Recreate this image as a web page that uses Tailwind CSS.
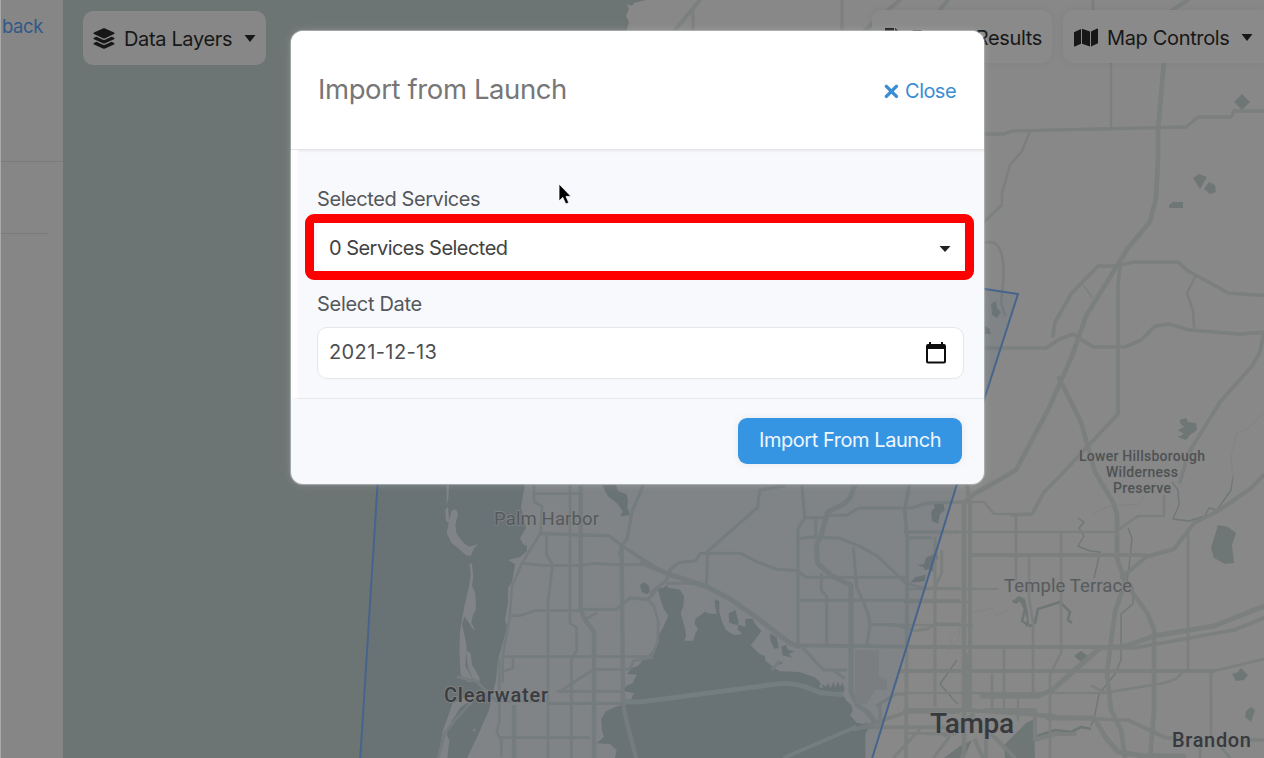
<!DOCTYPE html>
<html lang="en">
<head>
<meta charset="utf-8">
<title>Import from Launch</title>
<script src="https://cdn.jsdelivr.net/npm/@tailwindcss/browser@4"></script>
</head>
<body class="h-screen w-screen overflow-hidden bg-[#6d7475] font-['Inter','Liberation_Sans',sans-serif]">
<div class="relative flex h-[758px] w-[1264px] overflow-hidden">

  <!-- Map canvas -->
  <svg class="absolute inset-0" width="1264" height="758" viewBox="0 0 1264 758" fill="none" stroke-linejoin="round">
    <rect width="1264" height="758" fill="#6d7474"/>
    <!-- mainland -->
    <path fill="#888888" d="M646 0L634 3L632 6L627 4L629 9L626 16L629 22L626 32L620 200L525 484L521 507L526 528L520 538L523 544L527 546V551L520 557L508 560L515 564L512 582L508 588L508 603L505 620L507 627L498 660L496 680L489 710L478 735L467 758H1264V0Z"/>
    <!-- barrier islands -->
    <g transform="translate(340 470) scale(.33333)" fill="#888888">
      <path d="M320 45h7l-2 40-5 22zM316 120l8-10 4 48-10-4zM334 122l14-4 6 14-8 34 4 26 22 28 16 10 26-8-12 14-10 22-14-2-22-20-22-18-14-30z"/>
      <path d="M388 280l8 2 4 40-4 26 10 20 2 50-10 20-4 22 12 20-8-4-14-22-10-14-8 22 6 26 8 40-4 60 22 38 4 10h-18l-22-22-4-70 2-60 12-70 14-60 6-40z"/>
      <path d="M378 540l14 10 4 34 22 38 2 12-20-6-16-34zM338 700l40-20 24 6-40 26-26 40-16 40 8 20-6 52h-28l14-80zM400 775l8 4-8 8z"/>
    </g>
    <!-- Old Tampa Bay -->
    <g transform="translate(640 470) scale(.33333)" fill="#6d7474">
      <path d="M35 375l25-20 12-2 6-8 8 8 34 6 12 20-2 30-8 20 14 50 2 20-5 13h27l6-22 8-12-10-16 2-16 20-14 12-8 4 6 28 2-6-34 2-10 12 6 0 32 8 30 12 24 22 14h18l8-4-14-12 4-14 20 6v-24h22l6 14 20 24-18 24-14 18 24 24 18 8 2 14 30 24 14 8 58 2 46 16 14 12 4 8-6 10 64 12 20 28 16 16 2 16-8 12 20 22 22 4 10-6 2 22-8 14V868H-76l6-28-20-18-40-2 22-20-6-18-2-36 14-22 30-14 32-10 10-6 12-24-18-4-14-4 8-14 20-8 8-18 6-8-30-2 12-18 20-6 16-20 20-14 20-30 4-26 16-26 15-35-14-20-8-24-10-38z"/>
      <path d="M0 345l14-8 12 10 4 16-8 10-16-6zM266 430l20-10 4 16 6 20-4 10-24-8zM390 490l20 12 6 32-14 2-10-24zM424 530l14-6 6 16 20 4-18 8 12 12-30-8zM410 572l20 6-12 6z"/>
      <path d="M552 660l-8-18 14 8 6-10 8 14 8-18 6 16 8-16 6 14 8-12 6 20-4 8z"/>
      <path d="M-114 45h42l6 18 26 10 4 20-2 20 8 22-28 4 6-16-18-24-26-20z"/>
      <path d="M880 95l30 2 4 24-14 12-6 28-18-8-2-28 10-12zM890 245l4 20-16 22 4 18-16-8-10 4-6-10-20-6 22-2 6-20 18-8zM856 314l-2 20-44 4 16-16z"/>
    </g>
    <!-- lakes and rivers on the east side -->
    <g fill="#6f7776">
      <path d="M1234 102l8-8 8 8-8 8zM1193 178l6-4 8 3-7 12zM1204 189l5-7 6 3 1 7-6 2zM1169 205l4-3h10v6h-14zM1180 420l6-2 2 4 8 1 1 7-7 5-4 5-8-3 6-3-6-4 6-3-4-4z"/>
      <path d="M991 304l5-3 1 7 4 4-4 6-5-3zM985 326l4 2 2 6h-6z"/>
      <path d="M1218 525l10 2 8 6-4 12 2 18-9 1-11-6-3-10zM1074 656l7-5 7 5-7 6zM1232 674l6-2 3-4 7 7-4 5-8 1zM1246 711l5-4 4 3-4 12-6-5zM1012 601l7-5 6 3 3 14 1 11-4 4 2-8-5-20-6 4z"/>
      <path d="M944 758l16-12 12-6-8 18zM1004 745l22-22 8-4 1 39h-30z"/>
    </g>
    <path stroke="#6f7776" stroke-width="2.6" d="M1013 602l7-3 5 10-3 12 8 5 5-3 3-14 22-7 10 10-2 8 4 3M1037 736l18-6 16 2 10-5 10 2"/>
    <path stroke="#707877" stroke-width="1.4" d="M1078 518l6 4-5 6 5 8-6 10 12 5 10 1-6 26M1128 528l4 10-3 30-2 12 6 8v16l-12 10v46l-6 14-16 20-4 20 -4 12M1172 482l6 8 1 15-6 14 16 2 16-5 4-8 8 2 14-20 2-14M957 660l-17 24 12 14 6 6"/>
    <path stroke="#808483" d="M944 658l14-18 4-24 30-8 4 8 14-8M1264 412l-15 16-12 5-6 24 2 22M1092 514l18-8 30-2 6-12M953 645l-4-8 8-6"/>

    <!-- roads, north and east -->
    <g stroke="#7b7f7e" stroke-linecap="round">
      <path stroke-width="4" d="M700 0L675 30M900 0L865 30M948 0L938 12M1188 0L1165 15"/>
      <path stroke-width="3" d="M693 11v20M842 0v30M1093 0v10"/>
      <path stroke-width="3.4" d="M984 134h20l8-3 174-4 12-10h33l3-6h32"/>
      <path stroke-width="2.5" d="M1111 60v67M1030 131l-8 20-12 14-8 28v12l-18 17M985 243c16-6 20 16 18 40l-2 20 4 12M1195 277l-8 16 6 18 1 16"/>
      <path stroke-width="1.4" d="M1084 286l8 11"/>
      <path stroke-width="4.6" d="M1164 60l-6 70v30l-2 38-6 24-22 26-42 68-14 40-24 54-32 60-24 14-18 10-10 9v250l-6 16"/>
      <path stroke-width="3.6" d="M984 348h62l14-9 13-5 20 13h32l16-7 14-14 14-2 20 6 50 4 30-2M1264 332l-4 20-8 14-32 36-32 52-8 28M1053 336l2-14 16-28 27-28h16l20-4h44l10 9 26 14 14 8 44 3M1120 266l-2 20v128l-30 32-28 30-16 16-12 22-20 1"/>
      <path stroke-width="4.600" d="M1059 378l22 44 14 50 18 30 4 12v44l8 24-10 30-8 60 4 38 10 20 4 28M1132 592l16 22 6 16v80l-4 48"/>
      <path stroke-width="4" d="M1264 475l-14 14-32 22-24 12-20 26-28 8-24 20"/>
      <path stroke-width="5" d="M1264 606l-50 20-60 10-28 10-26 2-48 42-14 6h-56M1048 718h46l12 20 12 14 26 4h40"/>
      <path stroke-width="3.600" d="M1264 618l-30 12-100 18h-30M1040 716l78 4 10 0 38 18h14M1246 740h18"/>
      <path stroke-width="4" d="M970 555h176M910 647h200M900 671h314M905 710h60l90 6"/>
      <path stroke-width="2.600" d="M905 532h210M907 589h90M888 625h84M905 602h66M904 693h200l60-10 12-4 8-8M1016 514v66M1061 533v120l-11 22v83M1029 558v40l4 24v74M1188 534v136M1211 672v66M1214 671l50-12M1118 530l20-14h26v-20M950 502h34l10 12h32M1004 650v60M992 675v35M1018 696v24M1200 740v18M1222 748l8 10M1104 692l-12-6"/>
      <path stroke-width="4" d="M967 485l3 20v205M967 655v55M945 735l28-20M975 740l8 18M986 730v28M992 735l22 22M985 710h50v30l20 -6 20 0"/>
    </g>

    <!-- roads, Clearwater side -->
    <g transform="translate(340 470) scale(.33333)" stroke="#7b7f7e">
      <path stroke-width="13" d="M722 45v370l10 30 30 40v380M522 705v160M845 230l4 470 12 60 28 105"/>
      <path stroke-width="10" d="M596 190l120 5 90 2 40 30 60 40 54 34M720 418h110l40-34 54 4 36-40M625 700h230l105-12M910 45l-34 80-14 80-16 22-8 30"/>
      <path stroke-width="8" d="M582 45v50l24 14-4 80-56 90-30 70-8 100-20 110v80M548 280l60 6h120l30-6 60 4h100M510 438l34-2 40-14h136M585 71h136M690 45v415l20 12v70l-16 24v300M620 195v60l18 30-14 110v470M485 560h450l18-44 2-60-14-50-20-20M478 565v190l-8 30 14 26v50M485 606l34-12v-32M480 803h270M650 664h200M660 664l100-66h110l10-26 60-10M732 450l40-22"/>
      <path stroke-width="9" d="M350 620l60 14 60 60h150M400 690l-46 50-40 50-20 75"/>
    </g>
    <!-- roads, Tampa side -->
    <g transform="translate(640 470) scale(.33333)" stroke="#7b7f7e">
      <path stroke-width="15" d="M645 45l-16 40-16 16-50 24-16 60-18 45 4 50 40 36 60 30v320l20 40 30 20 22 32M0 275l80 35 120 40 70 36 90 64 90 70 30 10"/>
      <path stroke-width="11" d="M470 526l490 6M808 45l-14 75 8 90-4 655M640 780l80-26 80-28h160M665 772h300"/>
      <path stroke-width="9" d="M435 48l-76 12-6 52-150 132-4 106M30 370l50-40 10-30 26-22 50-6 16-22 120 0 50 26 60 22 60 4 26 20h300M486 45l8 100-20 30v355M470 207l40-6 90 4 60 24 50 28 90 84 56 14h100M495 143h60M527 143v60M560 136h60l36-22h160l40-14 110-4M475 391h485M544 310v50l16 20v146M640 230l10 120 34 80 6 34-10 66M688 464h76l60 18 40-6 20-14h76M805 203h70M805 186h150M885 200v510M905 240v70l-20 40M485 530l66 70h70M580 600l34 26M800 602h160M804 672h-36l-60 36M800 790l150 2M760 864l80-86M720 705v60M880 864l50-66M395 600l24-26"/>
      <path stroke-width="9" d="M80 340h80"/>
      <path stroke="#7a807f" stroke-width="15" d="M-50 694l50 2 380-50c50-8 80-8 120 6l40 16 70 6"/>
      <path stroke="#7a807f" stroke-width="12" d="M430 864l220-94"/>
    </g>
    <!-- airport -->
    <path fill="#818281" d="M855 650h24v26l8 4v10h-12l-8 14h-12z"/>

    <!-- service area -->
    <path fill="#476484" fill-opacity=".11" stroke="#46648c" stroke-width="2" d="M392 262L391 290L377.500 485L360 762H871L957 484L1018 294L985 289L800 262Z"/>

    <!-- place names -->
    <g font-family="Roboto, 'Noto Sans', sans-serif" stroke="#858787" stroke-width="2" paint-order="stroke" stroke-opacity=".7">
      <text x="494" y="525" font-size="18.500" fill="#56595c" textLength="105">Palm Harbor</text>
      <text x="444" y="702" font-size="20" font-weight="500" fill="#3a3c40" textLength="104">Clearwater</text>
      <text x="1004" y="592" font-size="18.500" fill="#595b5d" textLength="128">Temple Terrace</text>
      <text x="930" y="733" font-size="28" font-weight="500" fill="#38393d" textLength="84">Tampa</text>
      <text x="1172" y="747" font-size="20" font-weight="500" fill="#38393d" textLength="79">Brandon</text>
      <g font-size="14" font-weight="500" fill="#505254">
        <text x="1079" y="461" textLength="126">Lower Hillsborough</text>
        <text x="1106" y="477" textLength="72">Wilderness</text>
        <text x="1113" y="493" textLength="58">Preserve</text>
      </g>
    </g>
  </svg>

  <!-- Sidebar -->
  <aside class="relative h-full w-[63px] shrink-0 border-l border-[#a9a9a9] bg-[#868686] pt-[14px]">
    <a class="block h-6 pl-px text-[18.5px] leading-6 tracking-[-0.4px] text-[#30598a]">back</a>
    <div class="mt-[123px] h-px bg-[#7b7b7b]"></div>
    <div class="mt-[71px] mr-[14px] h-px bg-[#7b7b7b]"></div>
  </aside>

  <!-- Map toolbar -->
  <div class="relative flex flex-1 items-start justify-between pl-5 text-[20px] tracking-[-0.35px] text-[#171717]">
    <button class="mt-[11px] flex h-[54px] w-[183px] items-center rounded-[10px] bg-[#878787] pt-px pl-[10px]">
      <svg width="22" height="21" viewBox="0 0 512 512" fill="#171717"><path d="M12 148l232 105c8 3 16 3 24 0l232-105c16-7 16-29 0-36L268 7c-8-3-16-3-24 0L12 112c-16 7-16 29 0 36zm488 90l-58-26-161 73c-16 7-34 7-50 0L70 212l-58 26c-16 7-16 29 0 36l232 105c8 3 16 3 24 0l232-105c16-7 16-29 0-36zm0 126l-58-26-161 73c-16 7-34 7-50 0L70 338l-58 26c-16 7-16 29 0 36l232 105c8 3 16 3 24 0l232-105c16-7 16-29 0-36z"/></svg>
      <span class="ml-[9px] w-[109px] pt-px text-left whitespace-nowrap">Data Layers</span>
      <svg class="ml-[11px]" width="12" height="7" viewBox="0 0 12 7"><path fill="#171717" d="M.5 0h11L6 7z"/></svg>
    </button>
    <div class="mt-[10px] flex gap-[11px]">
      <button class="flex h-[53px] w-[180px] items-center justify-end rounded-[10px] bg-[#8a8a8a] pt-px pr-[10px] shadow-[0_0_8px_rgba(0,0,0,0.05)]">
        <svg class="mr-[10px]" width="16" height="21" viewBox="0 0 16 21"><path fill="#171717" d="M0 1h9v5h6v14H0zM10 1l5 4h-5z"/></svg>
        <span class="pt-px whitespace-nowrap">Export Results</span>
      </button>
      <button class="flex h-[53px] w-[201px] items-center rounded-l-[10px] bg-[#8a8a8a] pt-px pl-[11px] shadow-[0_0_8px_rgba(0,0,0,0.05)]">
        <svg width="24" height="19" viewBox="0 0 24 19" fill="#171717"><path d="M0 4.200L7 1v14.800L.8 18.500Q0 18.600 0 18zM8 .8l8 2.600v15L8 15.800zM17 3.400L23.200.6Q24 .4 24 1.200v14l-7 3.200z"/></svg>
        <span class="ml-[9px] w-[124px] pt-px text-left whitespace-nowrap">Map Controls</span>
        <svg class="ml-[10px]" width="12" height="7" viewBox="0 0 12 7"><path fill="#171717" d="M.5 0h11L6 7z"/></svg>
      </button>
    </div>
  </div>

  <!-- Dialog -->
  <section class="absolute top-[31px] left-[291px] flex h-[453px] w-[693px] flex-col rounded-[12px] bg-[#f7f9fc] shadow-[0_0_10px_rgba(190,190,190,0.35),0_0_1px_1px_rgba(200,205,205,0.6)]">
    <header class="flex h-[119px] items-center justify-between rounded-t-[12px] border-b border-[#e4e5e7] bg-white pr-[28px] pl-[27px] shadow-[0_1px_3px_rgba(0,0,0,0.07)]">
      <h1 class="text-[27.5px] tracking-[-0.4px] whitespace-nowrap text-[#777777]">Import from Launch</h1>
      <a class="flex items-center gap-[6px] pt-[2px] text-[20px] tracking-[-0.55px] text-[#3a8dd3]">
        <svg width="15" height="15" viewBox="0 0 15 15"><path stroke="#3a8dd3" stroke-width="3.400" stroke-linecap="round" d="M2.400 2.400l10 10M12.400 2.400l-10 10"/></svg>
        <span>Close</span>
      </a>
    </header>
    <div class="flex h-[249px] flex-col border-b border-l-[7px] border-b-[#e6e8ea] border-l-[#fdfdfe] pt-[35px] pr-5 pl-[19px] text-[20px] text-[#54575b]">
      <label class="h-7 leading-7 tracking-[-0.42px]">Selected Services</label>
      <div class="relative mt-[9px] flex h-[50px] items-center justify-between rounded-[10px] bg-white pr-[13px] pl-3 text-[#424242]">
        <span class="pt-[2px] tracking-[-0.53px] whitespace-nowrap">0 Services Selected</span>
        <svg class="mt-[3px]" width="12" height="6" viewBox="0 0 12 6"><path fill="#222" d="M.5 0h11L6 6z"/></svg>
        <div class="absolute -inset-x-3 -top-2 h-[66px] w-[669px] rounded-[9px] border-[9px] border-[#ff0000]"></div>
      </div>
      <label class="mt-[18px] h-7 leading-7 tracking-[-0.3px]">Select Date</label>
      <div class="mt-[9px] flex h-[52px] shrink-0 items-center justify-between rounded-[10px] border border-[#e6e6e8] bg-white pr-[17px] pl-[11px] text-[#4e4e50]">
        <span class="pb-[2px] tracking-[0.4px] whitespace-nowrap">2021-12-13</span>
        <svg width="20" height="22" viewBox="0 0 20 22"><path fill="#0c0c0c" fill-rule="evenodd" d="M3 0h2v2h10V0h2v2h1q2 0 2 2v15.500q0 2-2 2H2q-2 0-2-2V4q0-2 2-2h1zM2 7v12.500h16V7z"/></svg>
      </div>
    </div>
    <footer class="flex flex-1 items-start justify-end pt-[19px] pr-[22px]">
      <button class="h-[46px] w-[224px] rounded-[9px] bg-[#3695e2] pb-[2px] text-[20px] tracking-[-0.45px] whitespace-nowrap text-[#eef7ff] shadow-[0_0_8px_rgba(0,0,0,0.07)]">Import From Launch</button>
    </footer>
  </section>

  <!-- Pointer -->
  <svg class="absolute top-[183px] left-[558px]" width="15" height="23" viewBox="0 0 15 23"><path fill="#000" stroke="#fff" stroke-width=".8" d="M1 1v17l3.800-3.600L7.800 21l3-1.300L8 13.400h5z"/></svg>
</div>
</body>
</html>
